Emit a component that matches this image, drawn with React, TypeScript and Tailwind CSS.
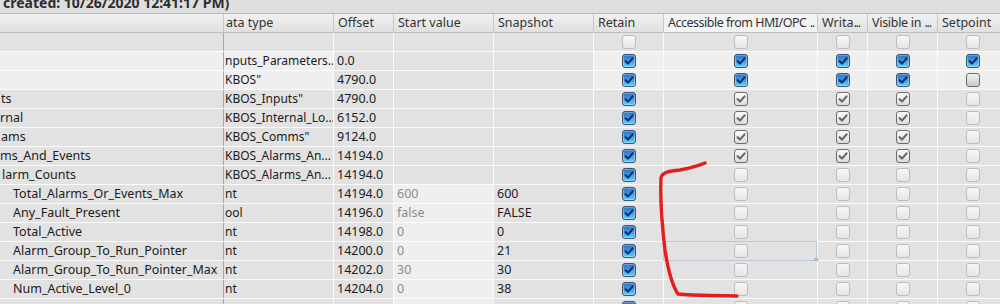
import React from 'react';

type Cb = 'b' | 'g' | 'u' | 'd';

interface Row {
    name: string;
    nameX: number;
    dt: string;
    off: string;
    start: string;
    snap: string;
    hi: boolean;       // editable row (lighter cells)
    startHi: boolean;  // start value editable
    cbs: Cb[];         // retain, hmi, writable, visible, setpoint
    sel?: boolean;
}

const ROWS: Row[] = [
    { name: '', nameX: 0, dt: '', off: '', start: '', snap: '', hi: false, startHi: false, cbs: ['d', 'd', 'd', 'd', 'd'] },
    { name: '', nameX: 0, dt: 'nputs_Parameters..', off: '0.0', start: '', snap: '', hi: true, startHi: false, cbs: ['b', 'b', 'b', 'b', 'b'] },
    { name: '', nameX: 0, dt: 'KBOS"', off: '4790.0', start: '', snap: '', hi: true, startHi: false, cbs: ['b', 'b', 'b', 'b', 'u'] },
    { name: 'ts', nameX: 1, dt: 'KBOS_Inputs"', off: '4790.0', start: '', snap: '', hi: false, startHi: false, cbs: ['b', 'g', 'g', 'g', 'd'] },
    { name: 'rnal', nameX: 0, dt: 'KBOS_Internal_Lo...', off: '6152.0', start: '', snap: '', hi: false, startHi: false, cbs: ['b', 'g', 'g', 'g', 'd'] },
    { name: 'ams', nameX: 1, dt: 'KBOS_Comms"', off: '9124.0', start: '', snap: '', hi: false, startHi: false, cbs: ['b', 'g', 'g', 'g', 'd'] },
    { name: 'ms_And_Events', nameX: 0, dt: 'KBOS_Alarms_An...', off: '14194.0', start: '', snap: '', hi: false, startHi: false, cbs: ['b', 'g', 'g', 'g', 'd'] },
    { name: 'larm_Counts', nameX: 2, dt: 'KBOS_Alarms_An...', off: '14194.0', start: '', snap: '', hi: false, startHi: false, cbs: ['b', 'd', 'd', 'd', 'd'] },
    { name: 'Total_Alarms_Or_Events_Max', nameX: 13, dt: 'nt', off: '14194.0', start: '600', snap: '600', hi: false, startHi: true, cbs: ['b', 'd', 'd', 'd', 'd'] },
    { name: 'Any_Fault_Present', nameX: 13, dt: 'ool', off: '14196.0', start: 'false', snap: 'FALSE', hi: false, startHi: true, cbs: ['b', 'd', 'd', 'd', 'd'] },
    { name: 'Total_Active', nameX: 13, dt: 'nt', off: '14198.0', start: '0', snap: '0', hi: false, startHi: true, cbs: ['b', 'd', 'd', 'd', 'd'] },
    { name: 'Alarm_Group_To_Run_Pointer', nameX: 13, dt: 'nt', off: '14200.0', start: '0', snap: '21', hi: false, startHi: true, cbs: ['b', 'd', 'd', 'd', 'd'], sel: true },
    { name: 'Alarm_Group_To_Run_Pointer_Max', nameX: 13, dt: 'nt', off: '14202.0', start: '30', snap: '30', hi: false, startHi: true, cbs: ['b', 'd', 'd', 'd', 'd'] },
    { name: 'Num_Active_Level_0', nameX: 13, dt: 'nt', off: '14204.0', start: '0', snap: '38', hi: false, startHi: true, cbs: ['b', 'd', 'd', 'd', 'd'] },
    { name: '', nameX: 13, dt: '', off: '', start: '', snap: '', hi: false, startHi: true, cbs: ['b', 'd', 'd', 'd', 'd'] },
];

const CB_WIDTHS = ['w-[70px]', 'w-[154px]', 'w-[50px]', 'w-[70px]', 'w-[70px]'];

const Check: React.FC<{ color: string }> = ({ color }) => (
    <svg width="12" height="12" viewBox="0 0 12 12" className="absolute left-0 top-0">
        <path d="M2.6 6.2 L5 8.6 L9.6 3.4" fill="none" stroke={color} strokeWidth="2.1" strokeLinecap="round" strokeLinejoin="round" />
    </svg>
);

const Checkbox: React.FC<{ state: Cb }> = ({ state }) => {
    if (state === 'b') {
        return (
            <div className="relative w-[14px] h-[14px] rounded-[3px] border border-[#3b5572] bg-[linear-gradient(180deg,#2c72c8_0%,#3c96de_45%,#5cd3f8_100%)] shadow-[inset_0_0_0_1px_rgba(255,255,255,0.3)]">
                <Check color="#0c2c6a" />
            </div>
        );
    }
    if (state === 'g') {
        return (
            <div className="relative w-[14px] h-[14px] rounded-[3px] border border-[#6d6d6d] bg-[linear-gradient(180deg,#fafafa,#dcdcdc)]">
                <Check color="#666666" />
            </div>
        );
    }
    if (state === 'u') {
        return <div className="w-[14px] h-[14px] rounded-[3px] border border-[#6a6a6a] bg-[linear-gradient(180deg,#f4f4f4,#c9c9c9)]" />;
    }
    return <div className="w-[14px] h-[14px] rounded-[3px] border border-[#bdbdbd] bg-[linear-gradient(180deg,#f7f7f7,#e6e6e6)]" />;
};

const Dots = () => <span className="tracking-[-1.2px]">...</span>;

const HeaderCell: React.FC<{ w: string; children?: React.ReactNode; hot?: boolean; pl?: string }> = ({ w, children, hot, pl = 'pl-[4px]' }) => (
    <div className={`${w} shrink-0 h-full border-r border-[#c6c6c6] ${pl} flex items-center overflow-hidden whitespace-nowrap ${hot ? 'bg-[#f3f3f3]' : ''}`}>
        {children}
    </div>
);

export default function App() {
    return (
        <div className="relative w-[1000px] h-[304px] overflow-hidden bg-[#e2e2e2] text-[12px] text-[#1b1b1b]" style={{ fontFamily: '"Noto Sans", "Open Sans", sans-serif' }}>
            {/* title bar, clipped at the top */}
            <div className="h-[13px] overflow-hidden bg-[#dedede]">
                <div className="-mt-[6px] pl-[3px] text-[14px] font-bold leading-[18px] text-[#2d2d2d] whitespace-nowrap">
                    created: 10/26/2020 12:41:17 PM)
                </div>
            </div>

            {/* column header */}
            <div className="flex h-[20px] border-t border-b border-[#bdbdbd] bg-[linear-gradient(180deg,#f1f1f1,#e0e0e0)] text-[#333] text-[12.5px]">
                <HeaderCell w="w-[224px]" />
                <HeaderCell w="w-[110px]" pl="pl-[2px]">ata type</HeaderCell>
                <HeaderCell w="w-[60px]">Offset</HeaderCell>
                <HeaderCell w="w-[100px]">Start value</HeaderCell>
                <HeaderCell w="w-[100px]">Snapshot</HeaderCell>
                <HeaderCell w="w-[70px]">Retain</HeaderCell>
                <HeaderCell w="w-[154px]" hot>
                    <span className="tracking-[-0.5px]">Accessible from HMI/OPC</span>&nbsp;<span className="tracking-[-1.2px]">..</span>
                </HeaderCell>
                <HeaderCell w="w-[50px]">Writa<Dots /></HeaderCell>
                <HeaderCell w="w-[70px]">
                    <span className="tracking-[-0.3px]">Visible in</span>&nbsp;<Dots />
                </HeaderCell>
                <HeaderCell w="w-[70px]">Setpoint</HeaderCell>
            </div>

            {/* rows */}
            {ROWS.map((r, i) => {
                const base = r.hi ? 'bg-[#efefef]' : 'bg-[#e2e2e2]';
                return (
                    <div key={i} className="flex h-[19px] border-b border-[#fbfbfb]">
                        <div className={`w-[224px] shrink-0 border-r border-[#a9a9a9] overflow-hidden whitespace-nowrap flex items-center text-[12.5px] ${base}`}>
                            <span style={{ marginLeft: r.nameX }}>{r.name}</span>
                        </div>
                        <div className={`w-[110px] shrink-0 border-r border-[#fbfbfb] overflow-hidden whitespace-nowrap flex items-center pl-[1px] ${base}`}>
                            {r.dt}
                        </div>
                        <div className="w-[60px] shrink-0 border-r border-[#fbfbfb] pl-[3px] flex items-center bg-[#e2e2e2] text-[12.5px]">{r.off}</div>
                        <div className={`w-[100px] shrink-0 border-r border-[#fbfbfb] pl-[3px] flex items-center text-[#8c8c8c] text-[12.5px] ${r.startHi ? 'bg-[#efefef]' : 'bg-[#e2e2e2]'}`}>{r.start}</div>
                        <div className="w-[100px] shrink-0 border-r border-[#fbfbfb] pl-[3px] flex items-center bg-[#e2e2e2] text-[12.5px]">{r.snap}</div>
                        {r.cbs.map((c, j) => (
                            <div key={j} className={`${CB_WIDTHS[j]} shrink-0 border-r border-[#fbfbfb] flex items-center justify-center relative ${base}`}>
                                <Checkbox state={c} />
                                {r.sel && j === 1 && (
                                    <div className="absolute -top-[1px] -left-[1px] right-0 -bottom-[1px] border border-[#b9c9d8]">
                                        <div className="absolute -right-[3px] -bottom-[3px] w-[5px] h-[5px] bg-[#a9bdd2]" />
                                    </div>
                                )}
                            </div>
                        ))}
                    </div>
                );
            })}

            {/* red hand-drawn annotation */}
            <svg className="absolute left-0 top-0 pointer-events-none" width="1000" height="304" viewBox="0 0 1000 304">
                <path
                    d="M705 163 C 698 166, 690 168, 680 170 C 670 171, 662 172, 661 178 C 660 200, 662 225, 665 250 C 668 270, 672 285, 678 294 C 695 296, 715 295, 737 296"
                    fill="none"
                    stroke="#e41d1d"
                    strokeWidth="3.4"
                    strokeLinecap="round"
                    strokeLinejoin="round"
                />
            </svg>
        </div>
    );
}
